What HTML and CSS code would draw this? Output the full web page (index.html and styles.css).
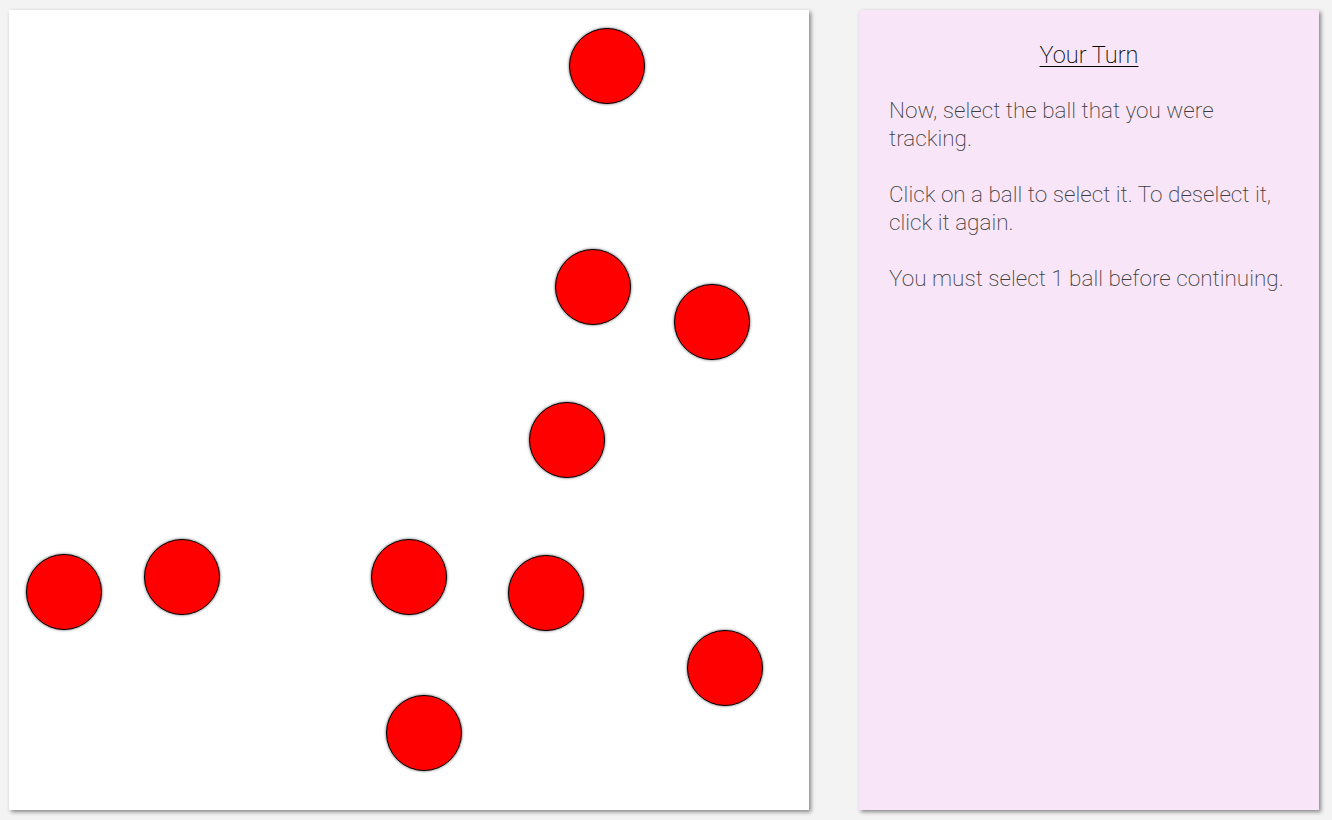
FILE: index.html
```html
<!DOCTYPE html>
<html lang="en">
<head>
<meta charset="utf-8">
<title>Your Turn</title>
<link rel="stylesheet" href="styles.css">
</head>
<body>
<main class="layout">
  <section class="arena">
    <div class="ball" style="left:560px;top:18px"></div>
    <div class="ball" style="left:546px;top:239px"></div>
    <div class="ball" style="left:665px;top:274px"></div>
    <div class="ball" style="left:520px;top:392px"></div>
    <div class="ball" style="left:17px;top:544px"></div>
    <div class="ball" style="left:135px;top:529px"></div>
    <div class="ball" style="left:362px;top:529px"></div>
    <div class="ball" style="left:499px;top:545px"></div>
    <div class="ball" style="left:678px;top:620px"></div>
    <div class="ball" style="left:377px;top:685px"></div>
  </section>
  <aside class="panel">
    <h1 class="title">Your Turn</h1>
    <p class="text">Now, select the ball that you were tracking.</p>
    <p class="text">Click on a ball to select it. To deselect it, click it again.</p>
    <p class="text">You must select 1 ball before continuing.</p>
  </aside>
</main>
</body>
</html>
```
FILE: styles.css
```css
html, body {
  margin: 0;
  padding: 0;
  background: #f3f3f3;
}
body {
  font-family: Roboto, "Liberation Sans", sans-serif;
  font-weight: 200;
}
.layout {
  display: flex;
  gap: 50px;
  padding: 10px 9px;
}
.arena {
  position: relative;
  width: 800px;
  height: 800px;
  flex: none;
  background: #ffffff;
  box-shadow: 2px 2px 4px rgba(0, 0, 0, 0.45);
}
.ball {
  position: absolute;
  width: 74px;
  height: 74px;
  border-radius: 50%;
  background: #ff0000;
  border: 1px solid #000;
  box-shadow: 0 0 3px rgba(0, 0, 0, 0.7);
}
.panel {
  width: 400px;
  height: 739px;
  flex: none;
  padding: 31px 30px 30px;
  background: #f8e6f8;
  box-shadow: 2px 2px 4px rgba(0, 0, 0, 0.45);
}
.title {
  margin: 0 0 27px;
  font-size: 23.5px;
  line-height: 28px;
  font-weight: 200;
  text-align: center;
  text-decoration: underline;
  text-underline-offset: 3px;
  text-decoration-thickness: 1px;
  color: #000;
}
.text {
  margin: 0 0 28px;
  font-size: 22.5px;
  line-height: 28px;
  font-weight: 200;
  color: #3e3e3e;
}
```
